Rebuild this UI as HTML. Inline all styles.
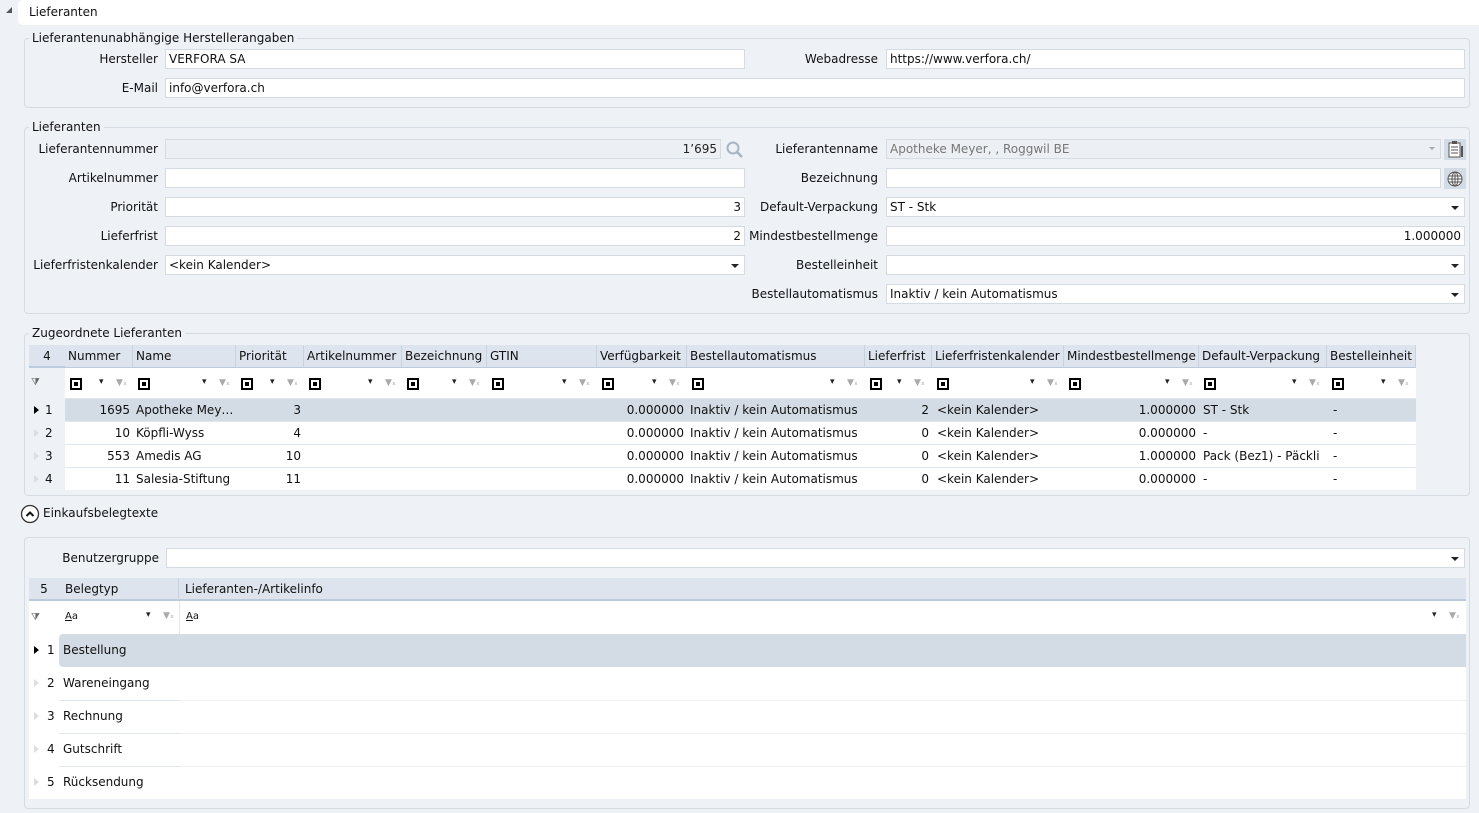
<!DOCTYPE html><html><head><meta charset="utf-8"><style>
*{box-sizing:border-box;margin:0;padding:0}
body{width:1479px;height:813px;background:#eef1f6;font:12px "DejaVu Sans",Verdana,sans-serif;color:#111;position:relative;overflow:hidden}
.a{position:absolute;white-space:nowrap}
.g{position:absolute;border:1px solid #d6dce4;border-radius:4px}
.lg{position:absolute;background:#eef1f6;padding:0 3px;line-height:14px}
.lb{position:absolute;text-align:right;line-height:20px;white-space:nowrap}
.in{position:absolute;height:20px;background:#fff;border:1px solid #d5dbe3;line-height:18px;padding:0 3px;white-space:nowrap}
.gr{background:#eceff3;color:#777}
.r{text-align:right}
.dd:after{content:"";position:absolute;right:5px;top:8px;border:4px solid transparent;border-top:4px solid #222;border-bottom:0}
.c{position:absolute;line-height:22px;padding:0 3px;overflow:hidden;white-space:nowrap}
.hd{background:#dde4ed;border-right:1px solid #c8d3e0}
.cb{display:inline-block;width:12px;height:12px;border:2px solid #000;position:relative;vertical-align:middle}
.cb:after{content:"";position:absolute;left:2px;top:2px;width:4px;height:4px;background:#000}
.fx{position:absolute;color:#aaa;font-size:9px}
.tri{position:absolute;border:4px solid transparent;border-left:5px solid #000;border-right:0}
.tril{border-left-color:#ddd}
</style></head><body>
<div class="a" style="left:18px;top:0;width:1461px;height:25px;background:#fff;border-radius:5px 0 0 5px"></div>
<div class="a" style="left:6px;top:7px;border:3px solid transparent;border-right:3px solid #555;border-bottom:3px solid #555"></div>
<div class="a" style="left:29px;top:5px">Lieferanten</div>

<div class="g" style="left:24px;top:38px;width:1446px;height:70px"></div>
<div class="lg" style="left:29px;top:31px">Lieferantenunabhängige Herstellerangaben</div>
<div class="lb" style="left:10px;width:148px;top:49px">Hersteller</div>
<div class="in" style="left:165px;top:49px;width:580px">VERFORA SA</div>
<div class="lb" style="left:730px;width:148px;top:49px">Webadresse</div>
<div class="in" style="left:886px;top:49px;width:579px">https://www.verfora.ch/</div>
<div class="lb" style="left:10px;width:148px;top:78px">E-Mail</div>
<div class="in" style="left:165px;top:78px;width:1300px">info@verfora.ch</div>

<div class="g" style="left:24px;top:127px;width:1446px;height:187px"></div>
<div class="lg" style="left:29px;top:120px">Lieferanten</div>
<div class="lb" style="left:10px;width:148px;top:139px">Lieferantennummer</div>
<div class="in gr r" style="left:165px;top:139px;width:556px;color:#222">1’695</div>
<svg class="a" style="left:725px;top:140px" width="20" height="18"><circle cx="8" cy="8" r="5.5" fill="none" stroke="#aab4c0" stroke-width="2"/><line x1="12" y1="12" x2="17" y2="17" stroke="#aab4c0" stroke-width="2.5"/></svg>
<div class="lb" style="left:730px;width:148px;top:139px">Lieferantenname</div>
<div class="in gr" style="left:886px;top:139px;width:555px">Apotheke Meyer, , Roggwil BE</div>
<div class="a" style="left:1429px;top:147px;border:3px solid transparent;border-top:3px solid #aaa"></div>
<div class="a" style="left:1444px;top:139px;width:22px;height:21px;background:#d3dbe4"></div>
<svg class="a" style="left:1446px;top:140px" width="18" height="19"><rect x="3" y="3" width="11" height="14" fill="#fff" stroke="#555"/><rect x="6" y="1" width="5" height="3" fill="#555"/><path d="M5 7h7M5 10h7M5 13h7" stroke="#555"/><rect x="15" y="6" width="2" height="11" fill="#555"/></svg>
<div class="lb" style="left:10px;width:148px;top:168px">Artikelnummer</div>
<div class="in" style="left:165px;top:168px;width:580px"></div>
<div class="lb" style="left:730px;width:148px;top:168px">Bezeichnung</div>
<div class="in" style="left:886px;top:168px;width:555px"></div>
<div class="a" style="left:1444px;top:168px;width:22px;height:21px;background:#d3dbe4"></div>
<svg class="a" style="left:1447px;top:171px" width="16" height="16"><circle cx="8" cy="8" r="7" fill="#fff" stroke="#555"/><ellipse cx="8" cy="8" rx="3" ry="7" fill="none" stroke="#555"/><path d="M1 8h14M2 5h12M2 11h12M8 1v14" stroke="#555"/></svg>
<div class="lb" style="left:10px;width:148px;top:197px">Priorität</div>
<div class="in r" style="left:165px;top:197px;width:580px">3</div>
<div class="lb" style="left:730px;width:148px;top:197px">Default-Verpackung</div>
<div class="in dd" style="left:886px;top:197px;width:579px">ST - Stk</div>
<div class="lb" style="left:10px;width:148px;top:226px">Lieferfrist</div>
<div class="in r" style="left:165px;top:226px;width:580px">2</div>
<div class="lb" style="left:730px;width:148px;top:226px">Mindestbestellmenge</div>
<div class="in r" style="left:886px;top:226px;width:579px">1.000000</div>
<div class="lb" style="left:10px;width:148px;top:255px">Lieferfristenkalender</div>
<div class="in dd" style="left:165px;top:255px;width:580px">&lt;kein Kalender&gt;</div>
<div class="lb" style="left:730px;width:148px;top:255px">Bestelleinheit</div>
<div class="in dd" style="left:886px;top:255px;width:579px"></div>
<div class="lb" style="left:730px;width:148px;top:284px">Bestellautomatismus</div>
<div class="in dd" style="left:886px;top:284px;width:579px">Inaktiv / kein Automatismus</div>

<div class="g" style="left:24px;top:333px;width:1446px;height:163px"></div>
<div class="lg" style="left:29px;top:326px">Zugeordnete Lieferanten</div>
<div class="a" style="left:29px;top:345px;width:1387px;height:145px;background:#fff"></div>
<div class="a" style="left:29px;top:345px;width:1387px;height:23px;background:#dde4ed;border-bottom:2px solid #bccbdc"></div>
<div class="a" style="left:29px;top:368px;width:36px;height:122px;background:#eef1f5"></div>
<div class="a" style="left:65px;top:399px;width:1351px;height:23px;background:#d3dbe5"></div>
<div class="a" style="left:65px;top:444px;width:1351px;height:1px;background:#e2e7ee"></div>
<div class="a" style="left:65px;top:421px;width:1351px;height:1px;background:#e2e7ee"></div>
<div class="a" style="left:65px;top:467px;width:1351px;height:1px;background:#e2e7ee"></div>
<div class="a" style="left:65px;top:398px;width:1351px;height:1px;background:#e2e7ee"></div>
<div class="c" style="left:29px;top:345px;width:36px;text-align:center">4</div>
<div class="a" style="left:31px;top:377px;font-size:10px;color:#666">⧩</div>
<div class="c hd" style="left:65px;top:345px;width:68px">Nummer</div>
<div class="c hd" style="left:133px;top:345px;width:103px">Name</div>
<div class="c hd" style="left:236px;top:345px;width:68px">Priorität</div>
<div class="c hd" style="left:304px;top:345px;width:98px">Artikelnummer</div>
<div class="c hd" style="left:402px;top:345px;width:85px">Bezeichnung</div>
<div class="c hd" style="left:487px;top:345px;width:110px">GTIN</div>
<div class="c hd" style="left:597px;top:345px;width:90px">Verfügbarkeit</div>
<div class="c hd" style="left:687px;top:345px;width:178px">Bestellautomatismus</div>
<div class="c hd" style="left:865px;top:345px;width:67px">Lieferfrist</div>
<div class="c hd" style="left:932px;top:345px;width:132px">Lieferfristenkalender</div>
<div class="c hd" style="left:1064px;top:345px;width:135px">Mindestbestellmenge</div>
<div class="c hd" style="left:1199px;top:345px;width:128px">Default-Verpackung</div>
<div class="c hd" style="left:1327px;top:345px;width:89px">Bestelleinheit</div>
<div class="c" style="left:67px;top:372px"><span class="cb"></span></div><div class="fx" style="left:99px;top:377px;color:#222">▾</div><div class="fx" style="left:116px;top:378px">▼ₓ</div>
<div class="c" style="left:135px;top:372px"><span class="cb"></span></div><div class="fx" style="left:202px;top:377px;color:#222">▾</div><div class="fx" style="left:219px;top:378px">▼ₓ</div>
<div class="c" style="left:238px;top:372px"><span class="cb"></span></div><div class="fx" style="left:270px;top:377px;color:#222">▾</div><div class="fx" style="left:287px;top:378px">▼ₓ</div>
<div class="c" style="left:306px;top:372px"><span class="cb"></span></div><div class="fx" style="left:368px;top:377px;color:#222">▾</div><div class="fx" style="left:385px;top:378px">▼ₓ</div>
<div class="c" style="left:404px;top:372px"><span class="cb"></span></div><div class="fx" style="left:452px;top:377px;color:#222">▾</div><div class="fx" style="left:469px;top:378px">▼ₓ</div>
<div class="c" style="left:489px;top:372px"><span class="cb"></span></div><div class="fx" style="left:562px;top:377px;color:#222">▾</div><div class="fx" style="left:579px;top:378px">▼ₓ</div>
<div class="c" style="left:599px;top:372px"><span class="cb"></span></div><div class="fx" style="left:652px;top:377px;color:#222">▾</div><div class="fx" style="left:669px;top:378px">▼ₓ</div>
<div class="c" style="left:689px;top:372px"><span class="cb"></span></div><div class="fx" style="left:830px;top:377px;color:#222">▾</div><div class="fx" style="left:847px;top:378px">▼ₓ</div>
<div class="c" style="left:867px;top:372px"><span class="cb"></span></div><div class="fx" style="left:897px;top:377px;color:#222">▾</div><div class="fx" style="left:914px;top:378px">▼ₓ</div>
<div class="c" style="left:934px;top:372px"><span class="cb"></span></div><div class="fx" style="left:1030px;top:377px;color:#222">▾</div><div class="fx" style="left:1047px;top:378px">▼ₓ</div>
<div class="c" style="left:1066px;top:372px"><span class="cb"></span></div><div class="fx" style="left:1165px;top:377px;color:#222">▾</div><div class="fx" style="left:1182px;top:378px">▼ₓ</div>
<div class="c" style="left:1201px;top:372px"><span class="cb"></span></div><div class="fx" style="left:1292px;top:377px;color:#222">▾</div><div class="fx" style="left:1309px;top:378px">▼ₓ</div>
<div class="c" style="left:1329px;top:372px"><span class="cb"></span></div><div class="fx" style="left:1381px;top:377px;color:#222">▾</div><div class="fx" style="left:1398px;top:378px">▼ₓ</div>
<div class="tri" style="left:34px;top:406px"></div><div class="c" style="left:42px;top:399px">1</div>
<div class="tri tril" style="left:34px;top:429px"></div><div class="c" style="left:42px;top:422px">2</div>
<div class="tri tril" style="left:34px;top:452px"></div><div class="c" style="left:42px;top:445px">3</div>
<div class="tri tril" style="left:34px;top:475px"></div><div class="c" style="left:42px;top:468px">4</div>
<div class="c r" style="left:65px;top:399px;width:68px">1695</div><div class="c" style="left:133px;top:399px;width:103px">Apotheke Mey…</div><div class="c r" style="left:236px;top:399px;width:68px">3</div><div class="c r" style="left:597px;top:399px;width:90px">0.000000</div><div class="c" style="left:687px;top:399px">Inaktiv / kein Automatismus</div><div class="c r" style="left:865px;top:399px;width:67px">2</div><div class="c" style="left:934px;top:399px">&lt;kein Kalender&gt;</div><div class="c r" style="left:1064px;top:399px;width:135px">1.000000</div><div class="c" style="left:1200px;top:399px">ST - Stk</div><div class="c" style="left:1330px;top:399px">-</div>
<div class="c r" style="left:65px;top:422px;width:68px">10</div><div class="c" style="left:133px;top:422px">Köpfli-Wyss</div><div class="c r" style="left:236px;top:422px;width:68px">4</div><div class="c r" style="left:597px;top:422px;width:90px">0.000000</div><div class="c" style="left:687px;top:422px">Inaktiv / kein Automatismus</div><div class="c r" style="left:865px;top:422px;width:67px">0</div><div class="c" style="left:934px;top:422px">&lt;kein Kalender&gt;</div><div class="c r" style="left:1064px;top:422px;width:135px">0.000000</div><div class="c" style="left:1200px;top:422px">-</div><div class="c" style="left:1330px;top:422px">-</div>
<div class="c r" style="left:65px;top:445px;width:68px">553</div><div class="c" style="left:133px;top:445px">Amedis AG</div><div class="c r" style="left:236px;top:445px;width:68px">10</div><div class="c r" style="left:597px;top:445px;width:90px">0.000000</div><div class="c" style="left:687px;top:445px">Inaktiv / kein Automatismus</div><div class="c r" style="left:865px;top:445px;width:67px">0</div><div class="c" style="left:934px;top:445px">&lt;kein Kalender&gt;</div><div class="c r" style="left:1064px;top:445px;width:135px">1.000000</div><div class="c" style="left:1200px;top:445px;width:127px">Pack (Bez1) - Päckli</div><div class="c" style="left:1330px;top:445px">-</div>
<div class="c r" style="left:65px;top:468px;width:68px">11</div><div class="c" style="left:133px;top:468px">Salesia-Stiftung</div><div class="c r" style="left:236px;top:468px;width:68px">11</div><div class="c r" style="left:597px;top:468px;width:90px">0.000000</div><div class="c" style="left:687px;top:468px">Inaktiv / kein Automatismus</div><div class="c r" style="left:865px;top:468px;width:67px">0</div><div class="c" style="left:934px;top:468px">&lt;kein Kalender&gt;</div><div class="c r" style="left:1064px;top:468px;width:135px">0.000000</div><div class="c" style="left:1200px;top:468px">-</div><div class="c" style="left:1330px;top:468px">-</div>

<svg class="a" style="left:20px;top:504px" width="20" height="20"><circle cx="10" cy="10" r="8.5" fill="#fff" stroke="#333" stroke-width="1.3"/><path d="M6.5 12l3.5-3.5 3.5 3.5" fill="none" stroke="#111" stroke-width="2"/></svg>
<div class="a" style="left:43px;top:506px">Einkaufsbelegtexte</div>

<div class="g" style="left:24px;top:537px;width:1446px;height:272px"></div>
<div class="lb" style="left:10px;width:149px;top:548px">Benutzergruppe</div>
<div class="in dd" style="left:166px;top:548px;width:1299px"></div>
<div class="a" style="left:29px;top:578px;width:1437px;height:221px;background:#fff"></div>
<div class="a" style="left:29px;top:578px;width:1437px;height:23px;background:#dde4ed;border-bottom:2px solid #bccbdc"></div>
<div class="c" style="left:29px;top:578px;width:30px;text-align:center">5</div>
<div class="c" style="left:62px;top:578px;width:117px;border-right:1px solid #c8d3e0">Belegtyp</div>
<div class="c" style="left:182px;top:578px">Lieferanten-/Artikelinfo</div>
<div class="a" style="left:31px;top:612px;font-size:10px;color:#666">⧩</div>
<div class="a" style="left:65px;top:611px;font-size:10px"><u>A</u>a</div>
<div class="fx" style="left:146px;top:610px;color:#222">▾</div><div class="fx" style="left:163px;top:611px">▼ₓ</div>
<div class="a" style="left:179px;top:601px;width:1px;height:33px;background:#e2e7ee"></div>
<div class="a" style="left:186px;top:611px;font-size:10px"><u>A</u>a</div>
<div class="fx" style="left:1432px;top:610px;color:#222">▾</div><div class="fx" style="left:1449px;top:611px">▼ₓ</div>
<div class="a" style="left:59px;top:634px;width:1407px;height:33px;background:#d3dbe5;border-radius:4px 0 0 4px"></div>
<div class="a" style="left:59px;top:700px;width:121px;height:1px;background:#e2e7ee"></div>
<div class="a" style="left:59px;top:733px;width:121px;height:1px;background:#e2e7ee"></div>
<div class="a" style="left:59px;top:766px;width:121px;height:1px;background:#e2e7ee"></div>
<div class="a" style="left:180px;top:700px;width:1286px;height:1px;background:#f0f2f5"></div>
<div class="a" style="left:180px;top:733px;width:1286px;height:1px;background:#f0f2f5"></div>
<div class="a" style="left:180px;top:766px;width:1286px;height:1px;background:#f0f2f5"></div>
<div class="tri" style="left:34px;top:646px"></div><div class="a" style="left:47px;top:643px">1</div><div class="a" style="left:63px;top:643px">Bestellung</div>
<div class="tri tril" style="left:34px;top:679px"></div><div class="a" style="left:47px;top:676px">2</div><div class="a" style="left:63px;top:676px">Wareneingang</div>
<div class="tri tril" style="left:34px;top:712px"></div><div class="a" style="left:47px;top:709px">3</div><div class="a" style="left:63px;top:709px">Rechnung</div>
<div class="tri tril" style="left:34px;top:745px"></div><div class="a" style="left:47px;top:742px">4</div><div class="a" style="left:63px;top:742px">Gutschrift</div>
<div class="tri tril" style="left:34px;top:778px"></div><div class="a" style="left:47px;top:775px">5</div><div class="a" style="left:63px;top:775px">Rücksendung</div>
</body></html>
